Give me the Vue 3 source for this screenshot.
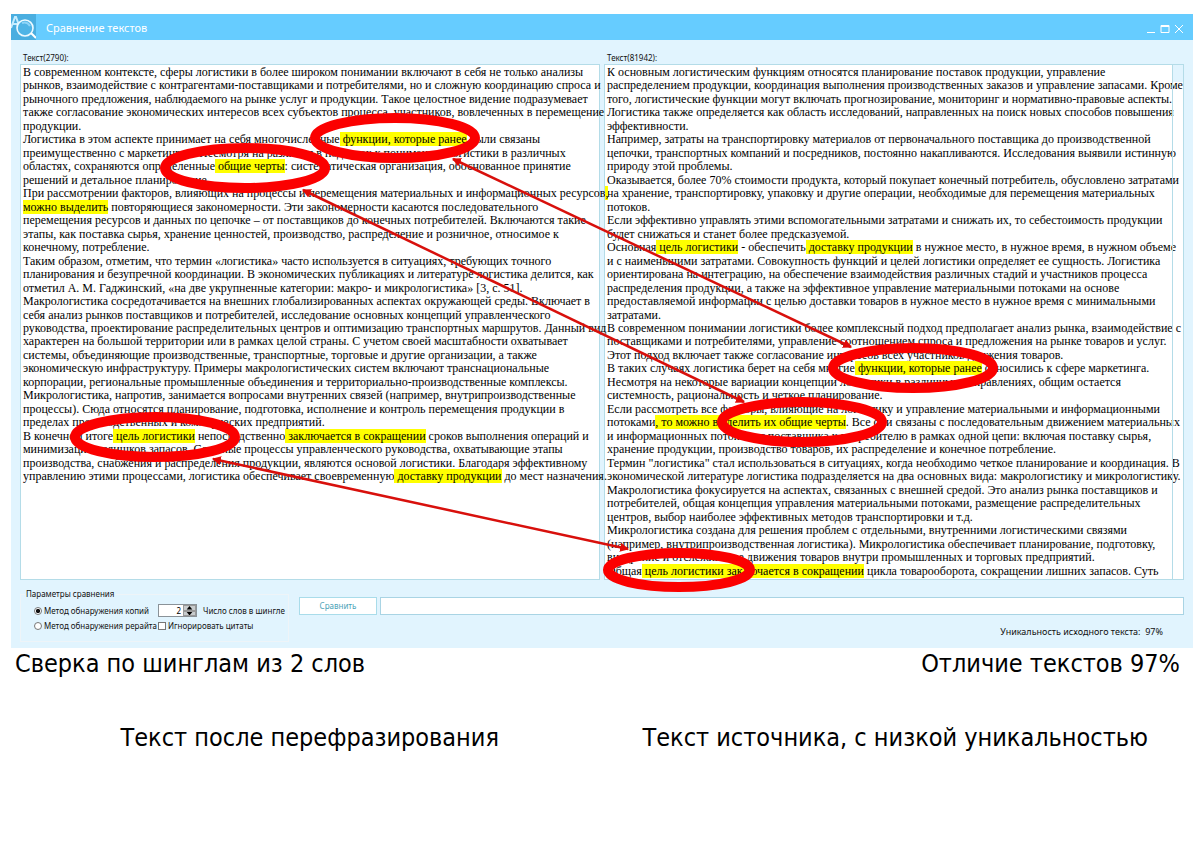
<script setup>
import { ref } from 'vue'

const method = ref('copy')
const shingle = ref(2)
const ignoreQuotes = ref(false)
const progress = ref('')

// Fragments between square brackets are highlighted.
const parse = (text) =>
  text.trim().split('\n').map((line) =>
    line.split(/[[\]]/).map((t, i) => ({ t, hit: i % 2 === 1 })).filter((p) => p.t)
  )

const leftLines = parse(`
В современном контексте, сферы логистики в более широком понимании включают в себя не только анализы
рынков, взаимодействие с контрагентами-поставщиками и потребителями, но и сложную координацию спроса и
рыночного предложения, наблюдаемого на рынке услуг и продукции. Такое целостное видение подразумевает
также согласование экономических интересов всех субъектов процесса, участников, вовлеченных в перемещение
продукции.
Логистика в этом аспекте принимает на себя многочисленные[ функции, которые ранее] были связаны
преимущественно с маркетингом. Несмотря на различия в подходах к пониманию логистики в различных
областях, сохраняются определенные[ общие черты]: систематическая организация, обоснованное принятие
решений и детальное планирование.
При рассмотрении факторов, влияющих на процессы и перемещения материальных и информационных ресурсов[,]
[можно выделить] повторяющиеся закономерности. Эти закономерности касаются последовательного
перемещения ресурсов и данных по цепочке – от поставщиков до конечных потребителей. Включаются такие
этапы, как поставка сырья, хранение ценностей, производство, распределение и розничное, относимое к
конечному, потребление.
Таким образом, отметим, что термин «логистика» часто используется в ситуациях, требующих точного
планирования и безупречной координации. В экономических публикациях и литературе логистика делится, как
отметил А. М. Гаджинский, «на две укрупненные категории: макро- и микрологистика» {3, с. 51}.
Макрологистика сосредотачивается на внешних глобализированных аспектах окружающей среды. Включает в
себя анализ рынков поставщиков и потребителей, исследование основных концепций управленческого
руководства, проектирование распределительных центров и оптимизацию транспортных маршрутов. Данный вид
характерен на большой территории или в рамках целой страны. С учетом своей масштабности охватывает
системы, объединяющие производственные, транспортные, торговые и другие организации, а также
экономическую инфраструктуру. Примеры макрологистических систем включают транснациональные
корпорации, региональные промышленные объединения и территориально-производственные комплексы.
Микрологистика, напротив, занимается вопросами внутренних связей (например, внутрипроизводственные
процессы). Сюда относятся планирование, подготовка, исполнение и контроль перемещения продукции в
пределах производственных и коммерческих предприятий.
В конечном итоге[ цель логистики] непосредственно[ заключается в сокращении] сроков выполнения операций и
минимизации излишков запасов. Сложные процессы управленческого руководства, охватывающие этапы
производства, снабжения и распределения продукции, являются основой логистики. Благодаря эффективному
управлению этими процессами, логистика обеспечивает своевременную[ доставку продукции] до мест назначения.
`).map((l) => l.map((p) => ({ ...p, t: p.t.replace('{', '[').replace('}', ']') })))

const rightLines = parse(`
К основным логистическим функциям относятся планирование поставок продукции, управление
распределением продукции, координация выполнения производственных заказов и управление запасами. Кроме
того, логистические функции могут включать прогнозирование, мониторинг и нормативно-правовые аспекты.
Логистика также определяется как область исследований, направленных на поиск новых способов повышения
эффективности.
Например, затраты на транспортировку материалов от первоначального поставщика до производственной
цепочки, транспортных компаний и посредников, постоянно накапливаются. Исследования выявили истинную
природу этой проблемы.
Оказывается, более 70% стоимости продукта, который покупает конечный потребитель, обусловлено затратами
на хранение, транспортировку, упаковку и другие операции, необходимые для перемещения материальных
потоков.
Если эффективно управлять этими вспомогательными затратами и снижать их, то себестоимость продукции
будет снижаться и станет более предсказуемой.
Основная[ цель логистики] - обеспечить[ доставку продукции] в нужное место, в нужное время, в нужном объеме
и с наименьшими затратами. Совокупность функций и целей логистики определяет ее сущность. Логистика
ориентирована на интеграцию, на обеспечение взаимодействия различных стадий и участников процесса
распределения продукции, а также на эффективное управление материальными потоками на основе
предоставляемой информации с целью доставки товаров в нужное место в нужное время с минимальными
затратами.
В современном понимании логистики более комплексный подход предполагает анализ рынка, взаимодействие с
поставщиками и потребителями, управление соотношением спроса и предложения на рынке товаров и услуг.
Этот подход включает также согласование интересов всех участников движения товаров.
В таких случаях логистика берет на себя многие[ функции, которые ранее] относились к сфере маркетинга.
Несмотря на некоторые вариации концепции логистики в различных направлениях, общим остается
системность, рациональность и четкое планирование.
Если рассмотреть все факторы, влияющие на логистику и управление материальными и информационными
потоками[, то можно выделить их общие черты]. Все они связаны с последовательным движением материальных
и информационных потоков от поставщика к потребителю в рамках одной цепи: включая поставку сырья,
хранение продукции, производство товаров, их распределение и конечное потребление.
Термин "логистика" стал использоваться в ситуациях, когда необходимо четкое планирование и координация. В
экономической литературе логистика подразделяется на два основных вида: макрологистику и микрологистику.
Макрологистика фокусируется на аспектах, связанных с внешней средой. Это анализ рынка поставщиков и
потребителей, общая концепция управления материальными потоками, размещение распределительных
центров, выбор наиболее эффективных методов транспортировки и т.д.
Микрологистика создана для решения проблем с отдельными, внутренними логистическими связями
(например, внутрипроизводственная логистика). Микрологистика обеспечивает планирование, подготовку,
внедрение и отслеживание движения товаров внутри промышленных и торговых предприятий.
Общая[ цель логистики заключается в сокращении] цикла товарооборота, сокращении лишних запасов. Суть
`)

const ellipses = [
  { cx: 395, cy: 138, rx: 80, ry: 20 },
  { cx: 245, cy: 168, rx: 80, ry: 20 },
  { cx: 155, cy: 437, rx: 80, ry: 20 },
  { cx: 913, cy: 368, rx: 80, ry: 20 },
  { cx: 802, cy: 422, rx: 80, ry: 20 },
  { cx: 679, cy: 570, rx: 71, ry: 17 }
]
const arrows = [
  { x1: 453, y1: 159, x2: 851, y2: 347 },
  { x1: 303, y1: 190, x2: 744, y2: 402 },
  { x1: 213, y1: 459, x2: 628, y2: 549 }
]
</script>

<template>
  <main class="page">
    <section class="window">
      <header class="titlebar">
        <svg class="logo" viewBox="0 0 25 26" aria-hidden="true">
          <rect width="25" height="26" fill="#4aaee0" />
          <path d="M0 14 L4 3 H5 L9 14 M2 10 H8" fill="none" stroke="#c4ecff" stroke-width="2" />
          <circle cx="14" cy="14" r="8" fill="#4fb4e6" stroke="#eefaff" stroke-width="1.6" />
          <path d="M11 9 Q16 7 19 12" fill="none" stroke="#8fd4f7" stroke-width="2" />
          <path d="M20 19 L25 24" stroke="#fff" stroke-width="2" />
        </svg>
        <h1>Сравнение текстов</h1>
        <div class="controls">
          <button type="button" aria-label="Свернуть">
            <svg viewBox="0 0 10 10"><path d="M1 8.5 H9" stroke="#fff" /></svg>
          </button>
          <button type="button" aria-label="Развернуть">
            <svg viewBox="0 0 10 10"><path d="M1 1.5 H9 V8.5 H1 Z M1 2.5 H9" fill="none" stroke="#fff" /></svg>
          </button>
          <button type="button" aria-label="Закрыть">
            <svg viewBox="0 0 10 10"><path d="M1 1 L9 9 M9 1 L1 9" stroke="#fff" /></svg>
          </button>
        </div>
      </header>

      <div class="panes">
        <section class="column source">
          <h2>Текст(2790):</h2>
          <div class="pane">
            <div class="text">
              <div v-for="(line, i) in leftLines" :key="i" class="line"><template v-for="(p, j) in line" :key="j"><mark v-if="p.hit">{{ p.t }}</mark><template v-else>{{ p.t }}</template></template></div>
            </div>
          </div>
        </section>
        <section class="column">
          <h2>Текст(81942):</h2>
          <div class="pane">
            <div class="text">
              <div v-for="(line, i) in rightLines" :key="i" class="line"><template v-for="(p, j) in line" :key="j"><mark v-if="p.hit">{{ p.t }}</mark><template v-else>{{ p.t }}</template></template></div>
            </div>
            <div class="scroll"><div class="thumb"></div></div>
          </div>
        </section>
      </div>

      <footer class="bottom">
        <fieldset class="params">
          <legend>Параметры сравнения</legend>
          <div class="options">
            <label><input v-model="method" type="radio" name="method" value="copy" />Метод обнаружения копий</label>
            <div class="count">
              <div class="spin">
                <input id="shingle" v-model="shingle" type="text" inputmode="numeric" />
                <div class="steps">
                  <button type="button" aria-label="Больше" @click="shingle++"><svg viewBox="0 0 12 5"><path d="M2 5 L6 0 L10 5 Z" /></svg></button>
                  <button type="button" aria-label="Меньше" @click="shingle--"><svg viewBox="0 0 12 5"><path d="M2 0 L6 5 L10 0 Z" /></svg></button>
                </div>
              </div>
              <label for="shingle">Число слов в шингле</label>
            </div>
            <label><input v-model="method" type="radio" name="method" value="rewrite" />Метод обнаружения рерайта</label>
            <label><input v-model="ignoreQuotes" type="checkbox" />Игнорировать цитаты</label>
          </div>
        </fieldset>
        <div class="actions">
          <div class="run">
            <button type="button" class="compare">Сравнить</button>
            <input v-model="progress" class="progress" type="text" readonly aria-label="Ход сравнения" />
          </div>
          <p class="status">Уникальность исходного текста:&nbsp; 97%</p>
        </div>
      </footer>

      <svg class="marks" viewBox="11 14 1182 634" preserveAspectRatio="none" aria-hidden="true">
        <defs>
          <marker id="tip" viewBox="0 0 8 8" refX="7" refY="4" markerWidth="9" markerHeight="9" markerUnits="userSpaceOnUse" orient="auto-start-reverse">
            <path d="M0 0 L8 4 L0 8 Z" fill="#e00b08" />
          </marker>
        </defs>
        <ellipse v-for="(e, i) in ellipses" :key="i" v-bind="e" fill="none" stroke="#fb0000" stroke-width="10" />
        <line v-for="(a, i) in arrows" :key="i" v-bind="a" stroke="#d8100c" stroke-width="2.5" marker-start="url(#tip)" marker-end="url(#tip)" />
      </svg>
    </section>

    <section class="captions">
      <p class="facts"><span>Сверка по шинглам из 2 слов</span><span>Отличие текстов 97%</span></p>
      <p class="names"><span>Текст после перефразирования</span><span>Текст источника, с низкой уникальностью</span></p>
    </section>
  </main>
</template>

<style>
body { margin: 0; background: #fff; }
</style>

<style scoped>
* { box-sizing: border-box; }
.page { padding: 14px 7px 0 11px; font-family: "Noto Sans", "Open Sans", sans-serif; color: #111; }
h1, h2, p { margin: 0; font-weight: 400; }
button { padding: 0; border: 0; background: none; font: inherit; }
.window { position: relative; background: #e1f4fe; }
.titlebar { display: flex; align-items: center; height: 26px; background: #6cf; color: #fff; }
.logo { width: 25px; height: 26px; }
h1 { margin-left: 10px; padding-top: 2px; font-size: 11px; line-height: 16px; }
.controls { display: flex; gap: 4px; margin-left: auto; padding: 3px 9px 0 0; }
.controls button, .controls svg { display: block; width: 10px; height: 10px; }
.panes { display: grid; grid-template-columns: 1fr 1fr; gap: 4px; padding: 12px 9px 0; }
.column { min-width: 0; }
.source { position: relative; z-index: 1; }
h2 { padding-left: 3px; font-size: 8px; line-height: 12px; }
.pane { display: flex; height: 516px; background: #fff; border: 1px solid #b4dce8; }
.text { flex: 1; min-width: 0; display: grid; grid-template-rows: repeat(38, 1fr); padding: 0 0 2px 2px; font-family: "Liberation Serif", "Times New Roman", serif; font-size: 12px; line-height: 14px; color: #000; }
.line { min-height: 0; white-space: pre; }
mark { background: #ff0; color: inherit; }
.scroll { width: 11px; border-left: 1px solid #b4dce8; }
.thumb { height: 17px; background: #e1f4fe; }
.bottom { display: flex; gap: 10px; padding: 8px 9px 6px; font-size: 8px; line-height: 12px; }
.params { width: 269px; height: 54px; margin: 0; padding: 0 0 0 13px; border: 1px solid #eef4f8; }
legend { margin-left: -9px; padding: 0 1px; line-height: 12px; }
.options { display: grid; grid-template-columns: 124px 1fr; row-gap: 3px; align-items: center; padding-top: 4px; white-space: nowrap; }
.options label { display: flex; align-items: center; gap: 2px; }
.options input[type="radio"], .options input[type="checkbox"] { appearance: none; flex: none; width: 8px; height: 8px; margin: 0; border: 1px solid #777; background: #fff; }
.options input[type="radio"] { border-radius: 50%; }
.options input[type="radio"]:checked { background: radial-gradient(circle, #111 45%, #fff 55%); }
.count { display: flex; align-items: center; gap: 6px; }
.spin { display: flex; width: 39px; height: 13px; border: 1px solid #8a9298; background: #fff; }
.spin input { flex: 1; min-width: 0; padding: 0 2px; border: 0; background: none; font: inherit; text-align: right; }
.steps { display: flex; flex-direction: column; width: 13px; background: #c8ccce; }
.steps button { flex: 1; min-height: 0; border: 1px solid #999; }
.steps svg { display: block; width: 100%; height: 100%; }
.actions { flex: 1; min-width: 0; padding-top: 9px; }
.run { display: flex; gap: 3px; }
.compare { width: 78px; height: 18px; border: 1px solid #a9dcea; background: #fff; color: #4aa3b8; }
.progress { flex: 1; min-width: 0; height: 18px; border: 1px solid #a9d4e4; background: #fff; }
.status { padding: 11px 21px 0 0; font-size: 9px; text-align: right; }
.marks { position: absolute; z-index: 2; inset: 0; width: 100%; height: 100%; pointer-events: none; overflow: visible; }
.captions { font-family: "DejaVu Sans Condensed", "DejaVu Sans", sans-serif; font-size: 25px; line-height: 32px; color: #000; white-space: nowrap; }
.facts { display: flex; justify-content: space-between; padding: 0 13px 0 4px; }
.names { display: grid; grid-template-columns: 1fr 1fr; padding: 42px 5px 0 6px; text-align: center; }
</style>
